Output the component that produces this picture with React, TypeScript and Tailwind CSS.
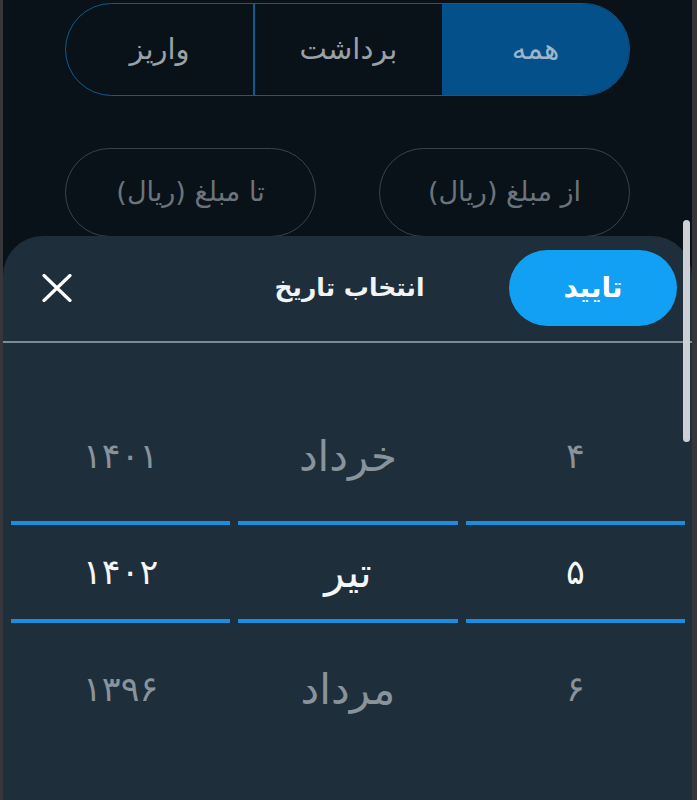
const font = { fontFamily: '"DejaVu Sans", "Noto Sans", sans-serif' };

const columns = [
  { top: "۱۴۰۱", mid: "۱۴۰۲", bottom: "۱۳۹۶", size: "text-[35px]" },
  { top: "خرداد", mid: "تیر", bottom: "مرداد", size: "text-[42px]" },
  { top: "۴", mid: "۵", bottom: "۶", size: "text-[35px]" },
];

function CloseIcon() {
  return (
    <svg width="30" height="28" viewBox="0 0 30 28" fill="none">
      <path
        d="M2 1.5 L28 26.5 M28 1.5 L2 26.5"
        stroke="white"
        strokeWidth="3.2"
        strokeLinecap="round"
      />
    </svg>
  );
}

export default function App() {
  return (
    <div
      className="h-[800px] w-[697px] overflow-hidden bg-[#37373b] pl-[3px] pr-[5px]"
      style={font}
    >
      <div dir="rtl" className="relative flex h-full flex-col bg-[#0a1219]">
        {/* segmented filter */}
        <div className="mx-[62px] mt-[3px] flex h-[93px] overflow-hidden rounded-full border-[1.5px] border-[#0f5c93]">
          <div className="flex flex-1 items-center justify-center bg-[#03508a] text-[29px] text-[#9db4c9]">
            همه
          </div>
          <div className="flex flex-1 items-center justify-center border-l-2 border-[#0f5c93] text-[29px] text-[#9aa1a7]">
            برداشت
          </div>
          <div className="flex flex-1 items-center justify-center text-[29px] text-[#9aa1a7]">
            واریز
          </div>
        </div>

        {/* amount inputs */}
        <div className="mx-[62px] mt-[52px] flex h-[89px] gap-[63px]">
          <div className="flex flex-1 items-center justify-center rounded-full border border-[#39424a] text-[27px] text-[#6c747b]">
            از مبلغ (ریال)
          </div>
          <div className="flex flex-1 items-center justify-center rounded-full border border-[#39424a] text-[27px] text-[#6c747b]">
            تا مبلغ (ریال)
          </div>
        </div>

        {/* date sheet */}
        <div className="-mt-[1px] flex flex-1 flex-col rounded-t-[40px] bg-[#1f2e3b]">
          <div className="mt-[14px] grid h-[76px] grid-cols-[1fr_auto_1fr] items-center pl-[39px] pr-[15px]">
            <button
              type="button"
              className="flex h-[76px] w-[168px] items-center justify-center rounded-full bg-[#12a0f4] text-[28px] font-bold text-white"
            >
              تایید
            </button>
            <div className="mr-[20px] text-center text-[25px] font-bold text-[#f1f3f4]">
              انتخاب تاریخ
            </div>
            <div className="flex justify-end">
              <CloseIcon />
            </div>
          </div>
          <div className="mt-[15px] h-[2px] bg-[#7d8b95]" />

          <div dir="ltr" className="grid grid-cols-3 gap-2 pl-[8px] pr-[7px] pt-[55px]">
            {columns.map((col, i) => (
              <div key={i} className={`flex flex-col ${col.size}`}>
                <div className="flex h-[123px] items-center justify-center pb-[6px] text-[#89939b]">
                  {col.top}
                </div>
                <div className="h-[4px] bg-[#1b8ce0]" />
                <div className="flex h-[94px] items-center justify-center text-[#f4f6f7]">
                  {col.mid}
                </div>
                <div className="h-[4px] bg-[#1b8ce0]" />
                <div className="flex h-[132px] items-center justify-center text-[#89939b]">
                  {col.bottom}
                </div>
              </div>
            ))}
          </div>
        </div>

        {/* scrollbar thumb */}
        <div className="absolute right-[2px] top-[220px] h-[222px] w-[7px] rounded-full bg-[#cdd1d5]" />
      </div>
    </div>
  );
}
